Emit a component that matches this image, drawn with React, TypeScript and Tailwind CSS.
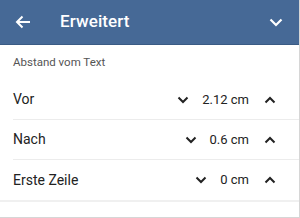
import React from 'react';

const rows = [
  { label: 'Vor', value: '2.12 cm' },
  { label: 'Nach', value: '0.6 cm' },
  { label: 'Erste Zeile', value: '0 cm' },
];

const Chevron = ({ up = false, className = '' }: { up?: boolean; className?: string }) => (
  <svg width="12" height="8" viewBox="0 0 12 8" className={className}>
    <path
      d={up ? 'M1.5 6.5 L6 2 L10.5 6.5' : 'M1.5 1.5 L6 6 L10.5 1.5'}
      fill="none"
      stroke="currentColor"
      strokeWidth="2"
    />
  </svg>
);

export default function App() {
  return (
    <div className="w-[300px] h-[218px] bg-white border-r border-b border-[#d6d6d6] overflow-hidden font-['Roboto',sans-serif]">
      {/* top bar */}
      <div className="h-[45px] bg-[#466996] border-b border-[#3a5b84] flex items-center text-white">
        <svg width="16" height="14" viewBox="0 0 16 14" className="ml-[15px]">
          <path d="M15 7 H2 M7.5 1.5 L2 7 L7.5 12.5" fill="none" stroke="currentColor" strokeWidth="2" />
        </svg>
        <span className="ml-[29px] text-[17px] font-medium tracking-[0.1px]">Erweitert</span>
        <svg width="14" height="9" viewBox="0 0 14 9" className="ml-auto mr-[16px]">
          <path d="M1.5 1.5 L7 7 L12.5 1.5" fill="none" stroke="currentColor" strokeWidth="2.2" />
        </svg>
      </div>

      <div className="h-[35px] flex items-center pl-[13px] text-[11.5px] text-[#555]">
        Abstand vom Text
      </div>

      <div className="border-b-2 border-[#f0f0f0]">
        {rows.map((r, i) => (
          <div
            key={r.label}
            className={`ml-[13px] h-[40px] flex items-center text-[14px] text-[#222] ${
              i < rows.length - 1 ? 'border-b border-[#ececec]' : ''
            }`}
          >
            <span>{r.label}</span>
            <div className="ml-auto flex items-center">
              <Chevron className="text-[#222]" />
              <span className="ml-[13px] whitespace-nowrap text-[13px]">{r.value}</span>
              <Chevron up className="ml-[15px] mr-[23px] text-[#222]" />
            </div>
          </div>
        ))}
      </div>
    </div>
  );
}
